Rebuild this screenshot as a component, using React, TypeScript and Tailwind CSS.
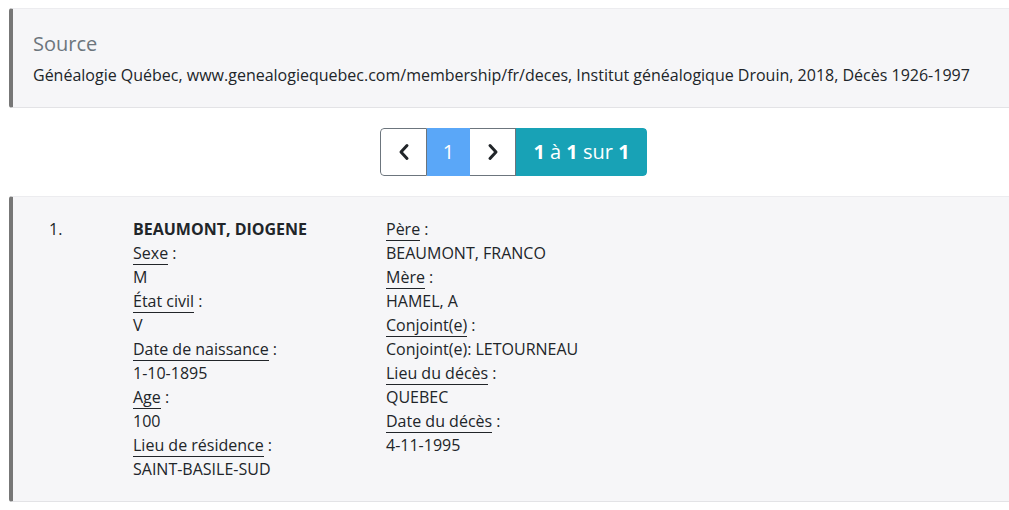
import React from "react";

const Label = ({ children }: { children: React.ReactNode }) => (
  <div>
    <span className="border-b border-[#212529]">{children}</span> :
  </div>
);

const ChevronL = () => (
  <svg width="14" height="18" viewBox="0 0 14 18" fill="none">
    <path d="M10 2.5 L4 9 L10 15.5" stroke="#212529" strokeWidth="3" strokeLinecap="round" strokeLinejoin="round" />
  </svg>
);
const ChevronR = () => (
  <svg width="14" height="18" viewBox="0 0 14 18" fill="none">
    <path d="M4 2.5 L10 9 L4 15.5" stroke="#212529" strokeWidth="3" strokeLinecap="round" strokeLinejoin="round" />
  </svg>
);

export default function App() {
  return (
    <div
      className="w-[1009px] min-h-[510px] bg-white pt-2 pl-[9px] text-[16px] leading-6 text-[#212529]"
      style={{ fontFamily: '"Open Sans", "Noto Sans", sans-serif' }}
    >
      <div className="border-t border-[#ececef] border-b border-b-[#e3e3e6] border-l-4 border-l-[#777777] rounded-l-[3px] bg-[#f6f6f8] pl-5 pt-[23px] pb-5">
        <div className="text-[20px] leading-6 text-[#6c757d] mb-[7px]">Source</div>
        <div>
          Généalogie Québec, www.genealogiequebec.com/membership/fr/deces, Institut généalogique Drouin, 2018, Décès 1926-1997
        </div>
      </div>

      <div className="flex justify-center pt-5 pb-5 pl-[9px]">
        <div className="flex h-12 rounded-[4px] overflow-hidden">
          <div className="w-[47px] flex items-center justify-center bg-white border border-[#6c757d] rounded-l-[4px]">
            <ChevronL />
          </div>
          <div className="w-[43px] flex items-center justify-center bg-[#5aa7f8] text-white text-[20px]">1</div>
          <div className="w-[46px] flex items-center justify-center bg-white border-y border-r border-[#6c757d]">
            <ChevronR />
          </div>
          <div className="w-[131px] flex items-center justify-center bg-[#18a2b6] text-white text-[20px] rounded-r-[4px]">
            <span>
              <b>1</b> à <b>1</b> sur <b>1</b>
            </span>
          </div>
        </div>
      </div>

      <div className="border-t border-[#ececef] border-b border-b-[#e3e3e6] border-l-4 border-l-[#777777] rounded-l-[3px] bg-[#f6f6f8] pt-5 pb-5">
        <div className="flex">
          <div className="w-[120px] pl-9">1.</div>
          <div className="w-[253px]">
            <div className="font-bold">BEAUMONT, DIOGENE</div>
            <Label>Sexe</Label>
            <div>M</div>
            <Label>État civil</Label>
            <div>V</div>
            <Label>Date de naissance</Label>
            <div>1-10-1895</div>
            <Label>Age</Label>
            <div>100</div>
            <Label>Lieu de résidence</Label>
            <div>SAINT-BASILE-SUD</div>
          </div>
          <div>
            <Label>Père</Label>
            <div>BEAUMONT, FRANCO</div>
            <Label>Mère</Label>
            <div>HAMEL, A</div>
            <Label>Conjoint(e)</Label>
            <div>Conjoint(e): LETOURNEAU</div>
            <Label>Lieu du décès</Label>
            <div>QUEBEC</div>
            <Label>Date du décès</Label>
            <div>4-11-1995</div>
          </div>
        </div>
      </div>
    </div>
  );
}
